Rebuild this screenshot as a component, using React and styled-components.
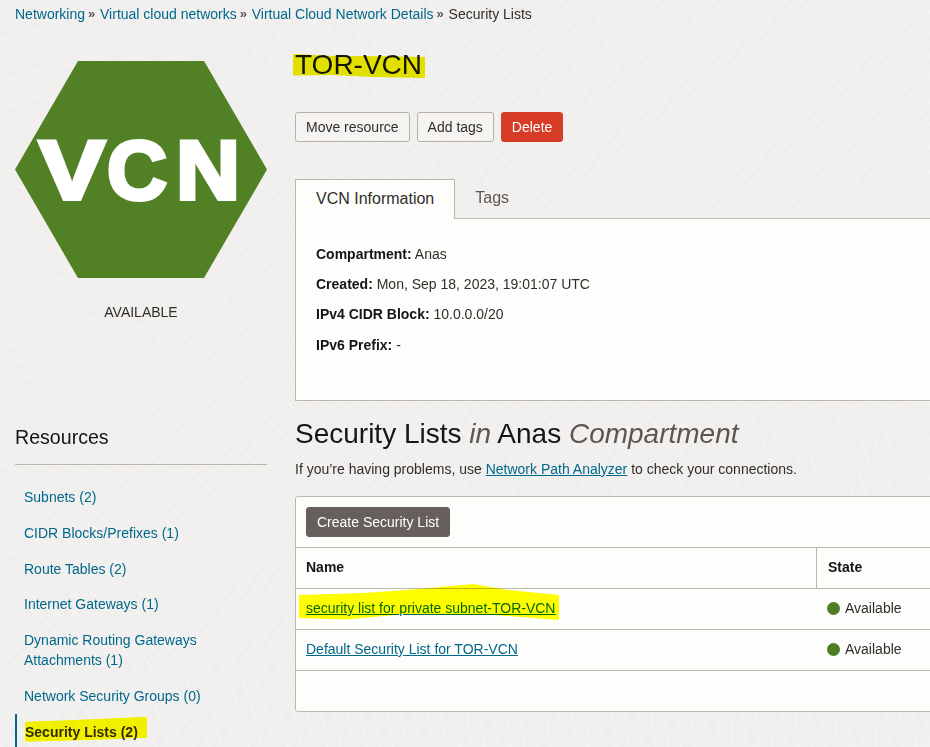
import styled, { createGlobalStyle } from "styled-components"

const GlobalStyle = createGlobalStyle`
  html, body {
    margin: 0;
    padding: 0;
    overflow: hidden;
  }
  body {
    font-family: "Liberation Sans", Arial, sans-serif;
    font-size: 14px;
    color: #312d2a;
    background-color: #f0efed;
  }
`

const Page = styled.div`
  width: 930px;
  height: 747px;
  padding: 0 0 0 15px;
  box-sizing: border-box;
  overflow: hidden;
  background-color: #f0efed;
  background-image:
    repeating-radial-gradient(circle at -120px 820px, transparent 0 10px, rgba(255, 255, 255, 0.2) 11px 12px, transparent 13px),
    repeating-radial-gradient(circle at 1050px -140px, transparent 0 10px, rgba(255, 255, 255, 0.14) 11px 12px, transparent 13px);
`

const Breadcrumb = styled.nav`
  display: flex;
  align-items: center;
  height: 27px;
  line-height: 20px;
`
const Crumb = styled.a`
  color: #00688c;
`
const CrumbSep = styled.span`
  width: 15px;
  padding-left: 3px;
  box-sizing: border-box;
  color: #555;
  font-weight: bold;
  font-size: 13px;
`

const Layout = styled.div`
  display: grid;
  grid-template-columns: 252px 700px;
  column-gap: 28px;
  padding-top: 18px;
`

const Sidebar = styled.aside`
  display: flex;
  flex-direction: column;
`
const Hexagon = styled.svg`
  display: block;
  margin-top: 16px;
`
const HexLabel = styled.text`
  font-family: "Liberation Sans", Arial, sans-serif;
  font-weight: bold;
  font-size: 84px;
  fill: #fff;
  stroke: #fff;
  stroke-width: 4px;
`
const StatusLabel = styled.div`
  margin-top: 24px;
  line-height: 20px;
  text-align: center;
  color: #312d2a;
`
const ResourcesTitle = styled.h3`
  margin: 101px 0 0;
  padding-bottom: 12px;
  border-bottom: 1px solid #bcb8b0;
  font-size: 19.6px;
  font-weight: normal;
  line-height: 29px;
  color: #161513;
`
const ResourceList = styled.ul`
  list-style: none;
  margin: 14.1px 0 0;
  padding: 0;
`
const ResourceItem = styled.li`
  padding: 7.9px 0 7.9px ${({ $active }) => ($active ? "8px" : "9px")};
  line-height: 20px;
  border-left: ${({ $active }) => ($active ? "2px solid #00688c" : "none")};
  color: ${({ $active }) => ($active ? "#312d2a" : "#00688c")};
  font-weight: ${({ $active }) => ($active ? "bold" : "normal")};
`

const Main = styled.main`
  display: flex;
  flex-direction: column;
  align-items: flex-start;
`
const Title = styled.h1`
  margin: 0;
  height: 38px;
  font-size: 28px;
  font-weight: normal;
  line-height: 40px;
  color: #161513;
`
const Actions = styled.div`
  display: flex;
  gap: 7px;
  margin-top: 29px;
`
const Button = styled.button`
  height: 30px;
  padding: 0 10px;
  box-sizing: border-box;
  border: 1px solid ${({ $bg }) => $bg || "#b5b1aa"};
  border-radius: 3px;
  background: ${({ $bg }) => $bg || "#f5f4f2"};
  color: ${({ $fg }) => $fg || "#312d2a"};
  font-family: inherit;
  font-size: 14px;
`

const Tabs = styled.div`
  display: flex;
  width: 100%;
  height: 39px;
  margin-top: 37px;
`
const Tab = styled.div`
  box-sizing: border-box;
  height: ${({ $active }) => ($active ? "40px" : "38px")};
  padding: 0 20px;
  font-size: 16px;
  line-height: 37px;
  color: ${({ $active }) => ($active ? "#312d2a" : "#5c5652")};
  background: ${({ $active }) => ($active ? "#fdfdfb" : "transparent")};
  border: ${({ $active }) => ($active ? "1px solid #bcb8b0" : "none")};
  border-bottom: none;
  position: relative;
  z-index: 1;
`
const InfoPanel = styled.section`
  width: 100%;
  height: 183px;
  box-sizing: border-box;
  padding: 20px 20px 0;
  background: #fdfdfb;
  border: 1px solid #bcb8b0;
`
const InfoLine = styled.div`
  height: 30.2px;
  line-height: 30px;
  color: #312d2a;
  strong {
    color: #161513;
  }
`

const SectionTitle = styled.h2`
  margin: 13px 0 0;
  font-size: 28px;
  font-weight: normal;
  line-height: 40px;
  color: #161513;
  em {
    color: #5c5652;
  }
`
const Hint = styled.p`
  margin: 5px 0 0;
  line-height: 20px;
  color: #312d2a;
  a {
    color: #00688c;
    text-decoration: underline;
  }
`

const TablePanel = styled.section`
  width: 100%;
  margin-top: 17px;
  box-sizing: border-box;
  background: #fdfdfb;
  border: 1px solid #bcb8b0;
  border-radius: 3px;
`
const Toolbar = styled.div`
  display: flex;
  padding: 10px;
  height: 50px;
  box-sizing: border-box;
`
const Row = styled.div`
  display: grid;
  grid-template-columns: 520px 1fr;
  height: 41px;
  box-sizing: border-box;
  border-top: 1px solid #bcb8b0;
  align-items: center;
`
const HeaderCell = styled.div`
  height: 100%;
  box-sizing: border-box;
  display: flex;
  align-items: center;
  padding: 0 10px 2px ${({ $state }) => ($state ? "11px" : "10px")};
  font-weight: bold;
  color: #161513;
  border-left: ${({ $state }) => ($state ? "1px solid #bcb8b0" : "none")};
`
const NameCell = styled.div`
  padding: 0 0 2px 10px;
`
const NameLink = styled.a`
  color: #00688c;
  text-decoration: underline;
`
const StateCell = styled.div`
  display: flex;
  align-items: center;
  gap: 5px;
  padding: 0 0 2px 10px;
  margin-left: 1px;
  color: #312d2a;
`
const Dot = styled.span`
  width: 13px;
  height: 13px;
  border-radius: 50%;
  background: #4f7d26;
`
const TableFooter = styled.div`
  height: 41px;
  border-top: 1px solid #bcb8b0;
  box-sizing: border-box;
`

// marker strokes drawn on the screenshot, laid over the text like a real highlighter
const Marker = styled.span`
  position: relative;
  display: inline-block;
  &::after {
    content: "";
    position: absolute;
    left: ${({ $x }) => $x}px;
    top: ${({ $y }) => $y}px;
    width: ${({ $w }) => $w}px;
    height: ${({ $h }) => $h}px;
    background: ${({ $color }) => $color || "#ffff00"};
    mix-blend-mode: multiply;
    clip-path: polygon(${({ $shape }) => $shape});
    pointer-events: none;
  }
`

const rows = [
  { name: "security list for private subnet-TOR-VCN", marked: true },
  { name: "Default Security List for TOR-VCN" },
]

const resources = [
  "Subnets (2)",
  "CIDR Blocks/Prefixes (1)",
  "Route Tables (2)",
  "Internet Gateways (1)",
  "Dynamic Routing Gateways Attachments (1)",
  "Network Security Groups (0)",
]

export default function App() {
  return (
    <Page>
      <GlobalStyle />
      <Breadcrumb>
        <Crumb>Networking</Crumb>
        <CrumbSep>»</CrumbSep>
        <Crumb>Virtual cloud networks</Crumb>
        <CrumbSep>»</CrumbSep>
        <Crumb>Virtual Cloud Network Details</Crumb>
        <CrumbSep>»</CrumbSep>
        <span>Security Lists</span>
      </Breadcrumb>

      <Layout>
        <Sidebar>
          <Hexagon width="252" height="217" viewBox="0 0 252 217">
            <polygon points="63,0 189,0 252,108.5 189,217 63,217 0,108.5" fill="#528024" />
            <HexLabel x="24" y="138" textLength="66" lengthAdjust="spacingAndGlyphs">V</HexLabel>
            <HexLabel x="92" y="138" textLength="60" lengthAdjust="spacingAndGlyphs">C</HexLabel>
            <HexLabel x="161" y="138" textLength="64" lengthAdjust="spacingAndGlyphs">N</HexLabel>
          </Hexagon>
          <StatusLabel>AVAILABLE</StatusLabel>
          <ResourcesTitle>Resources</ResourcesTitle>
          <ResourceList>
            {resources.map((item) => (
              <ResourceItem key={item}>{item}</ResourceItem>
            ))}
            <ResourceItem $active>
              <Marker
                $x={0}
                $y={-5}
                $w={122}
                $h={25}
                $shape="0 20%, 45% 12%, 100% 0, 100% 84%, 60% 92%, 0 100%"
              >
                Security Lists (2)
              </Marker>
            </ResourceItem>
          </ResourceList>
        </Sidebar>

        <Main>
          <Title>
            <Marker
              $x={-2}
              $y={9}
              $w={132}
              $h={24}
              $color="#eeee00"
              $shape="0 0, 30% 8%, 55% 8%, 100% 12%, 100% 100%, 60% 96%, 30% 88%, 0 90%"
            >
              TOR-VCN
            </Marker>
          </Title>
          <Actions>
            <Button>Move resource</Button>
            <Button>Add tags</Button>
            <Button $bg="#d73c26" $fg="#fff">Delete</Button>
          </Actions>

          <Tabs>
            <Tab $active>VCN Information</Tab>
            <Tab>Tags</Tab>
          </Tabs>
          <InfoPanel>
            <InfoLine><strong>Compartment:</strong> Anas</InfoLine>
            <InfoLine><strong>Created:</strong> Mon, Sep 18, 2023, 19:01:07 UTC</InfoLine>
            <InfoLine><strong>IPv4 CIDR Block:</strong> 10.0.0.0/20</InfoLine>
            <InfoLine><strong>IPv6 Prefix:</strong> -</InfoLine>
          </InfoPanel>

          <SectionTitle>
            Security Lists <em>in</em> Anas <em>Compartment</em>
          </SectionTitle>
          <Hint>
            If you’re having problems, use <a>Network Path Analyzer</a> to check your connections.
          </Hint>

          <TablePanel>
            <Toolbar>
              <Button $bg="#665f5b" $fg="#fff">Create Security List</Button>
            </Toolbar>
            <Row>
              <HeaderCell>Name</HeaderCell>
              <HeaderCell $state>State</HeaderCell>
            </Row>
            {rows.map((row) => (
              <Row key={row.name}>
                <NameCell>
                  {row.marked ? (
                    <Marker
                      $x={-7}
                      $y={-16}
                      $w={260}
                      $h={37}
                      $shape="0 30%, 25% 24%, 45% 14%, 67% 0, 80% 16%, 100% 30%, 100% 97%, 75% 84%, 40% 82%, 18% 96%, 0 92%"
                    >
                      <NameLink>{row.name}</NameLink>
                    </Marker>
                  ) : (
                    <NameLink>{row.name}</NameLink>
                  )}
                </NameCell>
                <StateCell>
                  <Dot />
                  Available
                </StateCell>
              </Row>
            ))}
            <TableFooter />
          </TablePanel>
        </Main>
      </Layout>
    </Page>
  )
}
